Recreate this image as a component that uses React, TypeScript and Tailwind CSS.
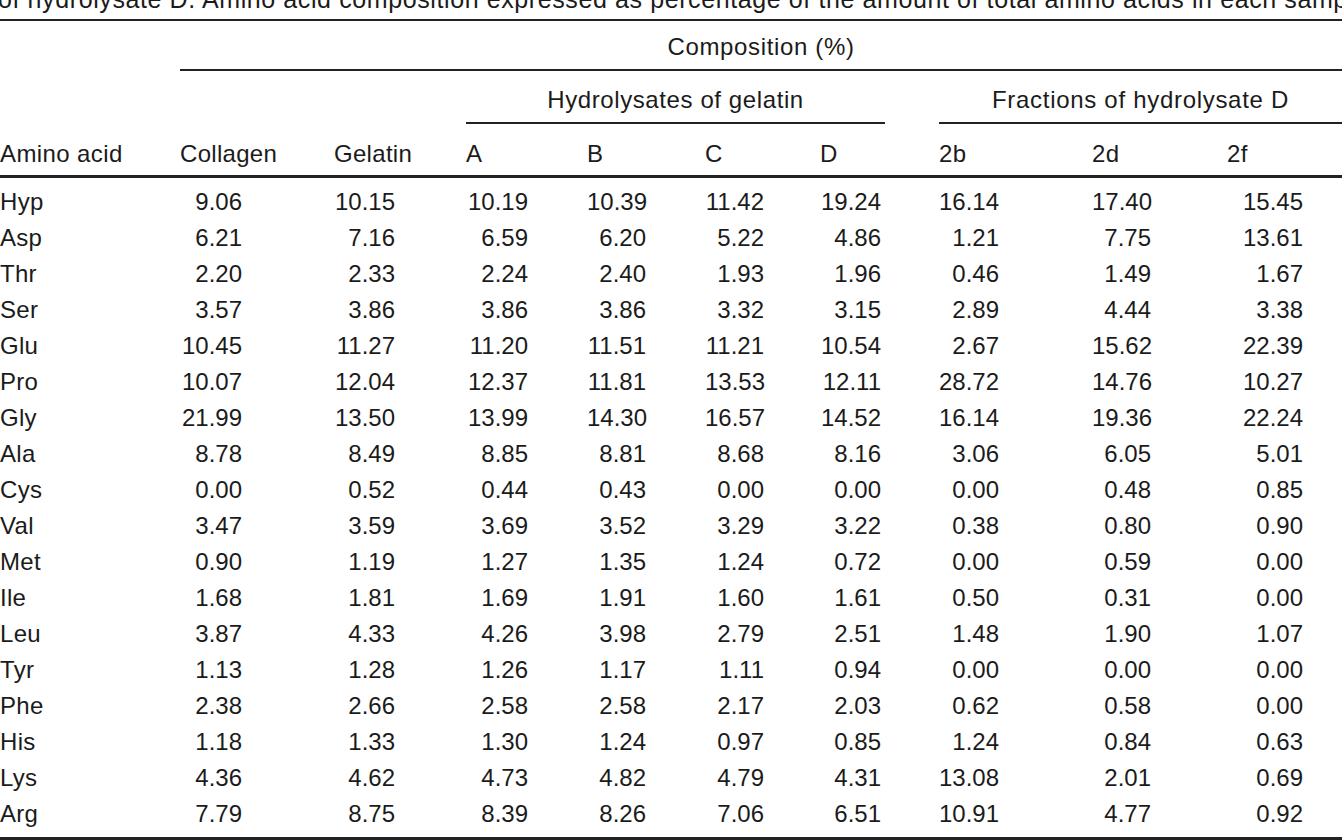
import React from "react";

const rows: [string, string[]][] = [
  ["Hyp", ["9.06", "10.15", "10.19", "10.39", "11.42", "19.24", "16.14", "17.40", "15.45"]],
  ["Asp", ["6.21", "7.16", "6.59", "6.20", "5.22", "4.86", "1.21", "7.75", "13.61"]],
  ["Thr", ["2.20", "2.33", "2.24", "2.40", "1.93", "1.96", "0.46", "1.49", "1.67"]],
  ["Ser", ["3.57", "3.86", "3.86", "3.86", "3.32", "3.15", "2.89", "4.44", "3.38"]],
  ["Glu", ["10.45", "11.27", "11.20", "11.51", "11.21", "10.54", "2.67", "15.62", "22.39"]],
  ["Pro", ["10.07", "12.04", "12.37", "11.81", "13.53", "12.11", "28.72", "14.76", "10.27"]],
  ["Gly", ["21.99", "13.50", "13.99", "14.30", "16.57", "14.52", "16.14", "19.36", "22.24"]],
  ["Ala", ["8.78", "8.49", "8.85", "8.81", "8.68", "8.16", "3.06", "6.05", "5.01"]],
  ["Cys", ["0.00", "0.52", "0.44", "0.43", "0.00", "0.00", "0.00", "0.48", "0.85"]],
  ["Val", ["3.47", "3.59", "3.69", "3.52", "3.29", "3.22", "0.38", "0.80", "0.90"]],
  ["Met", ["0.90", "1.19", "1.27", "1.35", "1.24", "0.72", "0.00", "0.59", "0.00"]],
  ["Ile", ["1.68", "1.81", "1.69", "1.91", "1.60", "1.61", "0.50", "0.31", "0.00"]],
  ["Leu", ["3.87", "4.33", "4.26", "3.98", "2.79", "2.51", "1.48", "1.90", "1.07"]],
  ["Tyr", ["1.13", "1.28", "1.26", "1.17", "1.11", "0.94", "0.00", "0.00", "0.00"]],
  ["Phe", ["2.38", "2.66", "2.58", "2.58", "2.17", "2.03", "0.62", "0.58", "0.00"]],
  ["His", ["1.18", "1.33", "1.30", "1.24", "0.97", "0.85", "1.24", "0.84", "0.63"]],
  ["Lys", ["4.36", "4.62", "4.73", "4.82", "4.79", "4.31", "13.08", "2.01", "0.69"]],
  ["Arg", ["7.79", "8.75", "8.39", "8.26", "7.06", "6.51", "10.91", "4.77", "0.92"]],
];

const headers = ["Collagen", "Gelatin", "A", "B", "C", "D", "2b", "2d", "2f"];
const valueWidths = [
  "w-[62px]",
  "w-[61px]",
  "w-[62px]",
  "w-[59px]",
  "w-[59px]",
  "w-[61px]",
  "w-[60px]",
  "w-[59px]",
  "w-[76px]",
];

const grid =
  "grid grid-cols-[180px_154px_132px_121px_118px_115px_119px_153px_135px_115px]";

export default function App() {
  return (
    <div className="w-[1342px] h-[840px] overflow-hidden bg-white text-[#1b1b1b] text-[24px] leading-[36px] font-['Liberation_Sans',Arial,sans-serif]">
      <div className="-mt-[19px] h-[36px] whitespace-nowrap overflow-hidden text-[25px] tracking-[0.6px] -ml-[2px]">
        of hydrolysate D. Amino acid composition expressed as percentage of the amount of total amino acids in each sample
      </div>
      <div className="mt-[2px] border-t-2 border-[#222]">
        <div className={`${grid} pt-[8px]`}>
          <div className="col-start-2 col-span-9 text-center border-b-2 border-[#222] pb-[4px] tracking-[0.65px]">
            Composition (%)
          </div>
        </div>
        <div className={`${grid} mt-[11px]`}>
          <div className="col-start-4 col-span-4 mr-[54px] text-center border-b-2 border-[#222] pb-[4px] tracking-[0.6px]">
            Hydrolysates of gelatin
          </div>
          <div className="col-span-3 text-center border-b-2 border-[#222] pb-[4px] tracking-[0.7px]">
            Fractions of hydrolysate D
          </div>
        </div>
        <div className={`${grid} mt-[12px] pb-[3px] border-b-[3px] border-[#222]`}>
          <div className="tracking-[0.4px]">Amino acid</div>
          {headers.map((h) => (
            <div key={h} className="tracking-[0.3px]">
              {h}
            </div>
          ))}
        </div>
        <div className="pt-[6px] pb-[5px] border-b-[3px] border-[#222]">
          {rows.map(([name, vals]) => (
            <div key={name} className={grid}>
              <div className="tracking-[0.3px]">{name}</div>
              {vals.map((v, i) => (
                <div key={i}>
                  <div className={`${valueWidths[i]} text-right`}>{v}</div>
                </div>
              ))}
            </div>
          ))}
        </div>
      </div>
    </div>
  );
}
